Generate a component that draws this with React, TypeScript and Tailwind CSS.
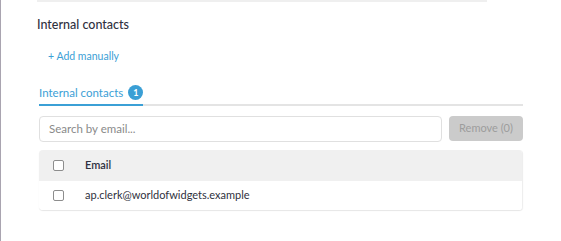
import React from "react";

export default function App() {
  const font = { fontFamily: "Lato, 'Open Sans', sans-serif" };
  return (
    <div className="w-[561px] h-[241px] bg-white border-l border-[#a9a4b0] relative overflow-hidden" style={font}>
      <div className="ml-[36px] w-[450px] h-[2px] bg-[#efefef]" />
      <div className="pl-[36px] pr-[38px]">
        <div className="mt-[15px] text-[12.5px] leading-[16px] text-[#2f3140] font-medium">Internal contacts</div>
        <div className="mt-[16px] ml-[11px] text-[10.5px] leading-[14px] text-[#3ba0d6]">+ Add manually</div>
        <div className="mt-[22px] ml-[2px] flex border-b-2 border-[#e4e4e4]">
          <div className="flex items-center gap-[5px] pb-[4px] -mb-[2px] border-b-2 border-[#3ba0d6]">
            <span className="text-[11.5px] leading-[14px] text-[#3ba0d6]">Internal contacts</span>
            <span className="w-[15px] h-[15px] rounded-full bg-[#3a9fd5] text-white text-[9px] font-bold flex items-center justify-center">1</span>
          </div>
        </div>
        <div className="mt-[10px] ml-[2px] flex gap-[7px]">
          <div className="flex-1 h-[26px] border border-[#e0e0e0] rounded-[4px] flex items-center pl-[9px] text-[11.5px] text-[#8a8a8a]">
            Search by email...
          </div>
          <div className="w-[74px] h-[25px] rounded-[4px] bg-[#cbcbcb] flex items-center justify-center text-[11px] text-[#9d9d9d]">
            Remove (0)
          </div>
        </div>
        <div className="mt-[8px] ml-[2px] rounded-[4px] overflow-hidden shadow-[0_1px_1px_rgba(0,0,0,0.1)] border-r border-[#eeeeee]">
          <div className="h-[31px] bg-[#f0f0f0] flex items-center">
            <span className="ml-[14px] w-[11px] h-[11px] border border-[#8d8d8d] rounded-[2px] bg-white" />
            <span className="ml-[21px] text-[11px] text-[#2f3140] font-semibold">Email</span>
          </div>
          <div className="h-[29px] bg-white flex items-center">
            <span className="ml-[14px] w-[11px] h-[11px] border border-[#8d8d8d] rounded-[2px] bg-white" />
            <span className="ml-[21px] text-[11px] text-[#2f3140]">ap.clerk@worldofwidgets.example</span>
          </div>
        </div>
      </div>
    </div>
  );
}
